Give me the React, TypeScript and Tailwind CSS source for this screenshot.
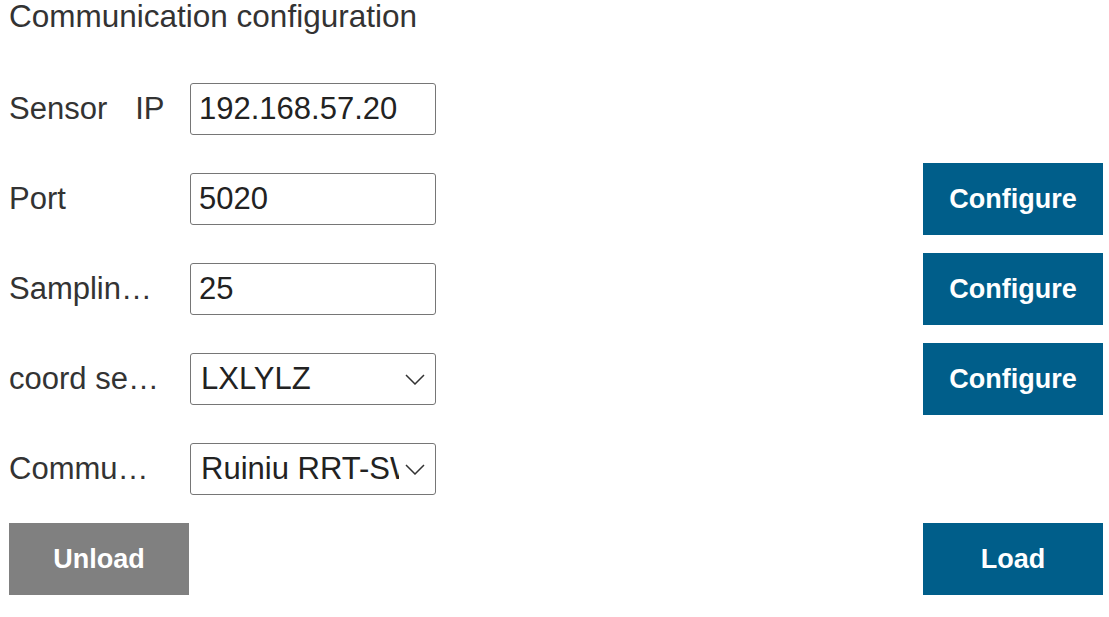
const font = { fontFamily: '"Liberation Sans", Arial, sans-serif' };

function Label({ children, free }: { children: React.ReactNode; free?: boolean }) {
  return (
    <div
      className={`w-[152px] shrink-0 whitespace-nowrap text-[31px] text-[#333] ${free ? "overflow-visible" : "overflow-hidden text-ellipsis"}`}
    >
      {children}
    </div>
  );
}

function TextBox({ value }: { value: string }) {
  return (
    <input
      defaultValue={value}
      className="h-[52px] w-[246px] rounded-[3px] border border-[#767676] bg-white px-[8px] text-[31px] text-[#222] outline-none"
    />
  );
}

function SelectBox({ value }: { value: string }) {
  return (
    <div className="flex h-[52px] w-[246px] items-center overflow-hidden rounded-[3px] border border-[#767676] bg-white pl-[10px] pr-[10px] text-[31px] text-[#222]">
      <span className="flex-1 overflow-hidden whitespace-nowrap">{value}</span>
      <svg width="20" height="11" viewBox="0 0 20 11" className="ml-[6px] shrink-0">
        <polyline points="1,1 10,10 19,1" fill="none" stroke="#333" strokeWidth="1.5" />
      </svg>
    </div>
  );
}

function Btn({ text, gray }: { text: string; gray?: boolean }) {
  return (
    <button
      className={`h-[72px] w-[180px] text-[27px] font-bold text-white ${gray ? "bg-[#808080]" : "bg-[#005e8a]"}`}
    >
      {text}
    </button>
  );
}

function Row({
  label,
  children,
  action,
  free,
}: {
  label: React.ReactNode;
  children: React.ReactNode;
  action?: boolean;
  free?: boolean;
}) {
  return (
    <div className="flex h-[72px] items-center">
      <Label free={free}>{label}</Label>
      <div className="ml-[29px]">{children}</div>
      <div className="flex-1" />
      {action ? <Btn text="Configure" /> : <div className="h-[72px] w-[180px]" />}
    </div>
  );
}

export default function App() {
  return (
    <div style={font} className="h-[617px] w-[1109px] bg-white pl-[9px] pr-[6px]">
      <div className="flex h-[73px] flex-col">
        <div className="-mt-[2px] text-[31.5px] leading-[36px] text-[#333]">Communication configuration</div>
      </div>
      <div className="flex flex-col gap-[18px]">
        <Row
          free
          label={
            <>
              <span>Sensor</span>
              <span className="ml-[28px]">IP</span>
            </>
          }
        >
          <TextBox value="192.168.57.20" />
        </Row>
        <Row label="Port" action>
          <TextBox value="5020" />
        </Row>
        <Row label="Sampling frequency" action>
          <TextBox value="25" />
        </Row>
        <Row label="coord select" action>
          <SelectBox value="LXLYLZ" />
        </Row>
        <Row label="Communication type">
          <SelectBox value="Ruiniu RRT-SW" />
        </Row>
        <div className="flex">
          <Btn text="Unload" gray />
          <div className="flex-1" />
          <Btn text="Load" />
        </div>
      </div>
    </div>
  );
}
